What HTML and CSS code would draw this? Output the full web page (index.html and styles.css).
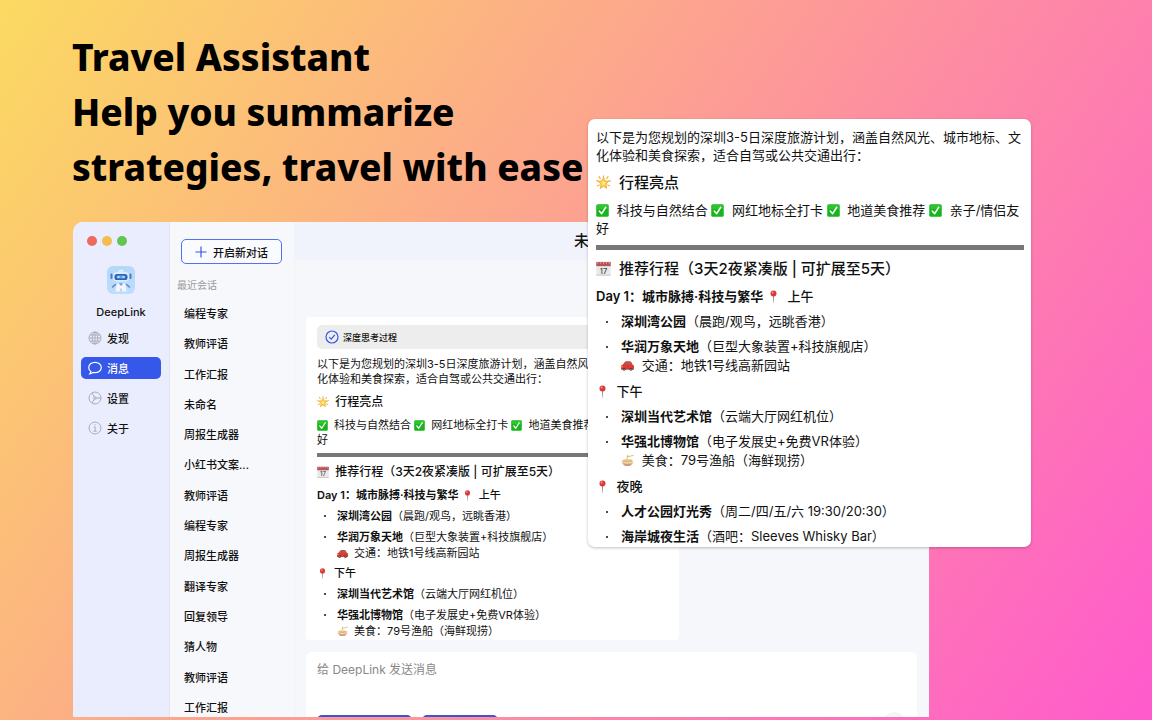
FILE: index.html
```html
<!DOCTYPE html>
<html lang="zh-CN">

<head>
    <meta charset="UTF-8">
    <meta name="viewport" content="width=device-width, initial-scale=1.0">
    <title>DeepLink - Travel Assistant</title>
    <link rel="stylesheet" href="styles.css">
</head>

<body>
    <!-- Shared icons -->
    <svg class="sprite" aria-hidden="true">
        <symbol id="star" viewBox="0 0 16 16">
            <g stroke="#f3b13a" stroke-width="1.3" stroke-linecap="round">
                <path d="M8 .8v2M3.200 1.800l1.300 2M12.800 1.800l-1.300 2M.8 6l2 .8M15.200 6l-2 .8M1.600 11.500l1.800-.9M14.400 11.500l-1.800-.9" />
            </g>
            <path d="M8 3l1.700 3.200 3.700.6-2.700 2.700.7 4.800L8 12l-3.400 2.300.7-4.800-2.700-2.700 3.700-.6z" fill="#fbcd46" stroke="#eda32c" stroke-width=".8" stroke-linejoin="round" />
            <path d="M8 5.500l.9 2 2 .4-1.500 1.400.3 1.800L8 10.200l-1.700.9.3-1.800-1.500-1.400 2-.4z" fill="#ffe985" />
        </symbol>
        <symbol id="check" viewBox="0 0 16 16">
            <rect x=".3" y=".3" width="15.400" height="15.400" rx="2" fill="#16b51c" />
            <path d="M1.500 1.300h13v5h-13z" fill="#42cf3c" opacity=".55" />
            <path d="M4 8.600l2.900 3.400L12 4" fill="none" stroke="#fff" stroke-width="1.800" stroke-linecap="round" stroke-linejoin="round" />
        </symbol>
        <symbol id="calendar" viewBox="0 0 16 16">
            <path d="M.3 1.500h15.400v14H.3z" fill="#e9e9e9" />
            <path d="M.3 1h15.400v4.500H.3z" fill="#b5535a" />
            <path d="M2 .5v2.500M5 .5v2.500M8 .5v2.500M11 .5v2.500M14 .5v2.500" stroke="#e9b6b6" stroke-width=".8" />
            <path d="M.3 14.700h15.400v.8H.3z" fill="#bdbdbd" />
            <text x="8" y="13.500" text-anchor="middle" class="calendar-day">17</text>
        </symbol>
        <symbol id="pin" viewBox="0 0 16 16">
            <path d="M7.300 7h1.400l-.4 8.600h-.6z" fill="#8d8f94" />
            <circle cx="8" cy="4.200" r="3.700" fill="#d93a37" />
            <circle cx="6.900" cy="3" r="1.200" fill="#f49a92" />
        </symbol>
        <symbol id="car" viewBox="0 0 16 16">
            <path d="M0 9.500c0-1.500 1-2.300 2.400-2.600l2-3C4.900 3.100 5.700 2.800 6.800 2.800h3.600c1.100 0 1.900.4 2.400 1.300L14.300 7c1.200.3 1.700 1 1.700 2.200v2.900c0 .7-.4 1.100-1 1.100H1c-.6 0-1-.4-1-1z" fill="#df3a2c" />
            <path d="M4.300 6.800l1.400-2.400c.2-.3.500-.5.900-.5h1.200v2.900zM8.600 3.900h1.700c.6 0 1.100.2 1.400.8l1.200 2.100H8.600z" fill="#8b6f72" />
            <circle cx="3.800" cy="12.700" r="1.700" fill="#33363a" />
            <circle cx="12.300" cy="12.700" r="1.700" fill="#33363a" />
            <circle cx="3.800" cy="12.700" r=".8" fill="#bbb" />
            <circle cx="12.300" cy="12.700" r=".8" fill="#bbb" />
            <path d="M.2 8.800h1.800v1.400H.2z" fill="#f8c35a" />
        </symbol>
        <symbol id="bowl" viewBox="0 0 16 16">
            <path d="M7 8L8.200 1.500M8.200 3.400L15 1.800" stroke="#c9b54c" stroke-width="1" stroke-linecap="round" />
            <path d="M.8 8.500h14.400c0 3.600-2.800 6-5.200 6.200H6C3.600 14.500.8 12.100.8 8.500z" fill="#e7c3a6" />
            <path d="M2.500 11.300c3.500 1.200 7.500 1.200 11 0-.9 2-2.300 3.300-4 3.400h-3c-1.700-.1-3.100-1.400-4-3.400z" fill="#cf9a80" />
            <ellipse cx="8" cy="8.500" rx="7.200" ry="2.600" fill="#f1e3cb" />
            <ellipse cx="8" cy="8.500" rx="5.700" ry="1.700" fill="#e3ae5b" />
            <path d="M4 8.300c1.300-.9 2.600.8 4 0s2.600.6 4 0" fill="none" stroke="#f7e2a0" stroke-width=".8" />
        </symbol>
    </svg>

    <div class="page">
        <h1>Travel Assistant<br>Help you summarize<br>strategies, travel with ease</h1>

        <div class="window">
            <aside class="rail">
                <div class="lights">
                    <span class="light red"></span>
                    <span class="light yellow"></span>
                    <span class="light green"></span>
                </div>
                <svg class="logo" viewBox="0 0 28 28" aria-hidden="true">
                    <defs>
                        <linearGradient id="sky" x1="0" y1="0" x2="0" y2="1">
                            <stop offset="0" stop-color="#b4d8f8" />
                            <stop offset="1" stop-color="#bfdcfb" />
                        </linearGradient>
                    </defs>
                    <rect width="28" height="28" rx="6" fill="url(#sky)" />
                    <path d="M12 5.500c.5-1.500 3.500-1.500 4 0" fill="none" stroke="#eef6ff" stroke-width="1.500" />
                    <rect x="6" y="6" width="16" height="9.500" rx="4" fill="#dcebfd" />
                    <rect x="7.500" y="8" width="13" height="6" rx="2.600" fill="#2d62b5" />
                    <rect x="9.500" y="9.500" width="9" height="3" rx="1.500" fill="#5ca4ec" />
                    <path d="M10.500 11h2M15.500 11h2" stroke="#c9f1ff" stroke-width="1.400" />
                    <rect x="3.500" y="7.500" width="2" height="5.500" rx="1" fill="#4679c9" />
                    <rect x="22.500" y="7.500" width="2" height="5.500" rx="1" fill="#4679c9" />
                    <path d="M9.500 18c1.500-1.200 7.500-1.200 9 0l1 7.500h-11z" fill="#f1f6fe" />
                    <path d="M12 17h4l-1 2.500h-2z" fill="#7aa7e2" />
                    <path d="M8.500 18.500L5.500 21M19.500 18.500l3 2.500" stroke="#5b87c6" stroke-width="1.600" stroke-linecap="round" />
                    <path d="M14 22.500v3" stroke="#8fb4e8" stroke-width="1" />
                </svg>
                <div class="brand">DeepLink</div>
                <nav class="nav">
                    <a href="#discover">
                        <svg viewBox="0 0 14 14" aria-hidden="true">
                            <circle cx="7" cy="7" r="6" />
                            <ellipse cx="7" cy="7" rx="2.800" ry="6" />
                            <path d="M1 7h12M7 1v12M1.900 4h10.200M1.900 10h10.200" />
                        </svg>
                        发现
                    </a>
                    <a href="#messages" class="active">
                        <svg viewBox="0 0 14 14" aria-hidden="true">
                            <path d="M7 1.300c3.500 0 6.300 2.200 6.300 5.200S10.500 11.700 7 11.700c-.7 0-1.400-.1-2-.3-.8.8-1.900 1.300-3.200 1.400.6-.7 1-1.500 1-2.400C1.500 9.500.7 8.100.7 6.500c0-3 2.800-5.200 6.300-5.200z" />
                        </svg>
                        消息
                    </a>
                    <a href="#settings">
                        <svg viewBox="0 0 14 14" aria-hidden="true">
                            <circle cx="7" cy="7" r="6" />
                            <circle cx="7" cy="7" r="1.200" />
                            <path d="M8.200 7h4.600M6.400 6L4.100 2M6.400 8l-2.300 4" />
                        </svg>
                        设置
                    </a>
                    <a href="#about">
                        <svg viewBox="0 0 14 14" aria-hidden="true">
                            <circle cx="7" cy="7" r="6" />
                            <path d="M5.800 6h1.400v4M5.500 10.200h3.200M7 3.300v1.200" />
                        </svg>
                        关于
                    </a>
                </nav>
            </aside>

            <section class="history">
                <button class="new-chat" type="button">
                    <svg viewBox="0 0 12 12" aria-hidden="true"><path d="M6 .5v11M.5 6h11" /></svg>
                    开启新对话
                </button>
                <h2>最近会话</h2>
                <ul>
                    <li>编程专家</li>
                    <li>教师评语</li>
                    <li>工作汇报</li>
                    <li>未命名</li>
                    <li>周报生成器</li>
                    <li>小红书文案...</li>
                    <li>教师评语</li>
                    <li>编程专家</li>
                    <li>周报生成器</li>
                    <li>翻译专家</li>
                    <li>回复领导</li>
                    <li>猜人物</li>
                    <li>教师评语</li>
                    <li>工作汇报</li>
                </ul>
            </section>

            <main class="chat">
                <header class="chat-title">未命名会话</header>
                <article class="message plan">
                    <div class="thinking">
                        <svg viewBox="0 0 14 14" aria-hidden="true">
                            <circle cx="7" cy="7" r="6" />
                            <path d="M4.200 7.200l2 2 3.600-4.400" />
                        </svg>
                        深度思考过程
                    </div>
                    <p>以下是为您规划的深圳3-5日深度旅游计划，涵盖自然风光、城市地标、文<br>化体验和美食探索，适合自驾或公共交通出行：</p>
                    <h3><svg class="emoji"><use href="#star" /></svg> 行程亮点</h3>
                    <p><svg class="emoji"><use href="#check" /></svg> 科技与自然结合 <svg class="emoji"><use href="#check" /></svg> 网红地标全打卡 <svg class="emoji"><use href="#check" /></svg> 地道美食推荐 <svg class="emoji"><use href="#check" /></svg> 亲子/情侣友<br>好</p>
                    <hr>
                    <h3><svg class="emoji"><use href="#calendar" /></svg> 推荐行程（3天2夜紧凑版 | 可扩展至5天）</h3>
                    <p><b>Day 1：城市脉搏·科技与繁华</b> <svg class="emoji"><use href="#pin" /></svg> <span class="medium">上午</span></p>
                    <ul>
                        <li><b>深圳湾公园</b>（晨跑/观鸟，远眺香港）</li>
                        <li><b>华润万象天地</b>（巨型大象装置+科技旗舰店）<br><svg class="emoji"><use href="#car" /></svg> 交通：地铁1号线高新园站</li>
                    </ul>
                    <p class="medium"><svg class="emoji"><use href="#pin" /></svg> 下午</p>
                    <ul>
                        <li><b>深圳当代艺术馆</b>（云端大厅网红机位）</li>
                        <li><b>华强北博物馆</b>（电子发展史+免费VR体验）<br><svg class="emoji"><use href="#bowl" /></svg> 美食：79号渔船（海鲜现捞）</li>
                    </ul>
                </article>
                <form class="composer">
                    <textarea aria-label="消息" placeholder="给 DeepLink 发送消息"></textarea>
                    <div class="tools">
                        <button class="tool wide" type="button" aria-label="深度思考"></button>
                        <button class="tool" type="button" aria-label="联网搜索"></button>
                        <button class="send" type="submit" aria-label="发送"></button>
                    </div>
                </form>
            </main>
        </div>

        <!-- Enlarged answer floating over the window -->
        <article class="popup plan">
            <p>以下是为您规划的深圳3-5日深度旅游计划，涵盖自然风光、城市地标、文<br>化体验和美食探索，适合自驾或公共交通出行：</p>
            <h3><svg class="emoji"><use href="#star" /></svg> 行程亮点</h3>
            <p><svg class="emoji"><use href="#check" /></svg> 科技与自然结合 <svg class="emoji"><use href="#check" /></svg> 网红地标全打卡 <svg class="emoji"><use href="#check" /></svg> 地道美食推荐 <svg class="emoji"><use href="#check" /></svg> 亲子/情侣友<br>好</p>
            <hr>
            <h3><svg class="emoji"><use href="#calendar" /></svg> 推荐行程（3天2夜紧凑版 | 可扩展至5天）</h3>
            <p><b>Day 1：城市脉搏·科技与繁华</b> <svg class="emoji"><use href="#pin" /></svg> <span class="medium">上午</span></p>
            <ul>
                <li><b>深圳湾公园</b>（晨跑/观鸟，远眺香港）</li>
                <li><b>华润万象天地</b>（巨型大象装置+科技旗舰店）<br><svg class="emoji"><use href="#car" /></svg> 交通：地铁1号线高新园站</li>
            </ul>
            <p class="medium"><svg class="emoji"><use href="#pin" /></svg> 下午</p>
            <ul>
                <li><b>深圳当代艺术馆</b>（云端大厅网红机位）</li>
                <li><b>华强北博物馆</b>（电子发展史+免费VR体验）<br><svg class="emoji"><use href="#bowl" /></svg> 美食：79号渔船（海鲜现捞）</li>
            </ul>
            <p class="medium"><svg class="emoji"><use href="#pin" /></svg> 夜晚</p>
            <ul>
                <li><b>人才公园灯光秀</b>（周二/四/五/六 19:30/20:30）</li>
                <li><b>海岸城夜生活</b>（酒吧：Sleeves Whisky Bar）</li>
            </ul>
        </article>
    </div>
</body>

</html>
```

FILE: styles.css
```css
* {
    box-sizing: border-box;
}

body {
    margin: 0;
    font-family: Inter, "Noto Sans CJK SC", sans-serif;
    font-size: 11px;
    color: #111;
}

h1,
h2,
h3,
p,
ul {
    margin: 0;
    padding: 0;
    list-style: none;
}

.sprite {
    display: none;
}

.page {
    position: relative;
    display: flex;
    flex-direction: column;
    height: 100vh;
    padding: 29px 223px 3px 72px;
    overflow: hidden;
    background: linear-gradient(124deg, #fbda61 0%, #ff5acd 100%);
}

h1 {
    font-family: "Noto Sans", "Open Sans", sans-serif;
    font-size: 37px;
    font-weight: 800;
    line-height: 55px;
    white-space: nowrap;
    color: #000;
}

/* App window */
.window {
    display: flex;
    flex: 1;
    min-height: 0;
    margin: 28px 0 0 1px;
    overflow: hidden;
    border-radius: 10px 10px 0 0;
    background: #f6f7fa;
}

.rail {
    display: flex;
    flex-direction: column;
    align-items: center;
    width: 96px;
    padding: 14px 8px 0;
    background: #e9edfd;
}

.lights {
    display: flex;
    align-self: flex-start;
    gap: 5px;
    padding-left: 6px;
}

.light {
    width: 10px;
    height: 10px;
    border-radius: 50%;
}

.red {
    background: #ec6a5f;
}

.yellow {
    background: #f3be4e;
}

.green {
    background: #61c554;
}

.logo {
    width: 28px;
    height: 28px;
    margin-top: 20px;
}

.brand {
    margin-top: 10px;
    line-height: 16px;
    font-weight: 500;
}

.nav {
    display: flex;
    flex-direction: column;
    gap: 8px;
    width: 100%;
    margin-top: 7px;
}

.nav a {
    display: flex;
    align-items: center;
    gap: 5px;
    height: 22px;
    padding-left: 7px;
    border-radius: 5px;
    font-weight: 500;
    color: #111;
    text-decoration: none;
}

.nav svg {
    width: 14px;
    height: 14px;
    fill: none;
    stroke: #a9adba;
    stroke-width: 1;
}

.nav .active {
    background: #3558ea;
    color: #fff;
}

.nav .active svg {
    stroke: #fff;
    stroke-width: 1.2;
}

.history {
    display: flex;
    flex-direction: column;
    width: 126px;
    padding: 17px 12px 0 11px;
    border-left: 1px solid #e3e5ee;
    border-right: 1px solid #f1f3f6;
    background: #f7f8fb;
}

.new-chat {
    display: flex;
    flex: none;
    align-items: center;
    justify-content: center;
    gap: 6px;
    height: 25px;
    padding: 0;
    border: 1px solid #5572ec;
    border-radius: 5px;
    background: #fafbfe;
    font: 500 11px Inter, "Noto Sans CJK SC", sans-serif;
    color: #111;
}

.new-chat svg {
    width: 12px;
    height: 12px;
    stroke: #3558ea;
    stroke-width: 1.2;
}

.history h2 {
    margin: 13px 0 0 -4px;
    font-size: 10px;
    font-weight: 400;
    line-height: 16px;
    color: #999;
}

.history ul {
    display: flex;
    flex: 1;
    flex-direction: column;
    justify-content: space-between;
    margin: 12px 0 -1px;
    padding-left: 3px;
}

.history li {
    line-height: 19px;
    font-weight: 500;
}

.chat {
    flex: 1;
    min-width: 0;
    padding: 0 12px 0 11px;
    background: linear-gradient(#f1f3fc 0, #f1f3fc 38px, #f6f7fa 39px);
}

.chat-title {
    height: 38px;
    line-height: 38px;
    font-size: 15px;
    font-weight: 500;
    text-align: center;
}

/* Travel plan, shared by the message and the popup */
.plan {
    white-space: nowrap;
    background: #fff;
}

.plan h3 {
    font-weight: 500;
}

.plan b {
    font-weight: 600;
}

.medium {
    font-weight: 500;
}

.plan hr {
    border: 0;
    background: #777;
}

.plan li {
    position: relative;
}

.plan li::before {
    content: "";
    position: absolute;
    width: 2px;
    height: 2px;
    border-radius: 50%;
    background: #111;
}

.emoji {
    width: 1em;
    height: 1em;
    margin-right: 3px;
    vertical-align: -2px;
}

.calendar-day {
    font-size: 8px;
    fill: #444;
}

.message {
    width: 61%;
    margin-top: 57px;
    padding: 8px 0 1px 11px;
    border-radius: 4px;
    overflow: hidden;
}

.message p {
    margin-top: 8px;
    line-height: 15px;
}

.message h3 {
    margin-top: 7px;
    font-size: 12px;
    line-height: 16px;
}

.message hr {
    height: 4px;
    margin: 5px 0 0;
}

.message ul {
    margin-top: 5px;
}

.message li {
    margin-top: 5px;
    padding-left: 20px;
    line-height: 16px;
}

.message ul + p {
    margin-top: 5px;
}

.message li::before {
    top: 7px;
    left: 7px;
}

.thinking {
    display: flex;
    align-items: center;
    gap: 4px;
    height: 24px;
    padding-left: 8px;
    border-radius: 5px;
    background: #ededed;
    font-size: 9px;
    font-weight: 500;
}

.thinking svg {
    width: 14px;
    height: 14px;
    fill: none;
    stroke: #3558ea;
    stroke-width: 1.2;
}

.composer {
    display: flex;
    flex-direction: column;
    margin-top: 12px;
    padding: 9px 11px;
    border-radius: 6px;
    background: #fff;
}

.composer textarea {
    height: 49px;
    padding: 0;
    border: 0;
    resize: none;
    background: none;
    font: 12px/18px Inter, "Noto Sans CJK SC", sans-serif;
}

.composer textarea::placeholder {
    color: #888;
}

.tools {
    display: flex;
    align-items: center;
    gap: 10px;
}

.tool {
    width: 76px;
    height: 22px;
    margin-top: 5px;
    border: 0;
    border-radius: 5px;
    background: #3f55cf;
}

.wide {
    width: 95px;
}

.send {
    width: 24px;
    height: 24px;
    margin-left: auto;
    border: 0;
    border-radius: 50%;
    background: #f5f5f7;
}

.popup {
    position: absolute;
    top: 119px;
    left: 588px;
    right: 121px;
    padding: 9px 7px 1px 8px;
    overflow: hidden;
    border-radius: 7px;
    box-shadow: 0 1px 3px rgba(0, 0, 0, 0.25);
    font-size: 13px;
}

.popup p {
    line-height: 18px;
}

.popup h3 {
    margin: 9px 0 8px;
    font-size: 15px;
    line-height: 20px;
}

.popup hr {
    height: 5px;
    margin: 8px 0;
}

.popup ul {
    margin: 7px 0;
}

.popup li {
    padding-left: 25px;
    line-height: 19px;
}

.popup li + li {
    margin-top: 6px;
}

.popup li::before {
    top: 9px;
    left: 10px;
}

.popup ul:last-child {
    margin-bottom: 0;
}

.popup .emoji {
    margin-right: 4px;
}
```
